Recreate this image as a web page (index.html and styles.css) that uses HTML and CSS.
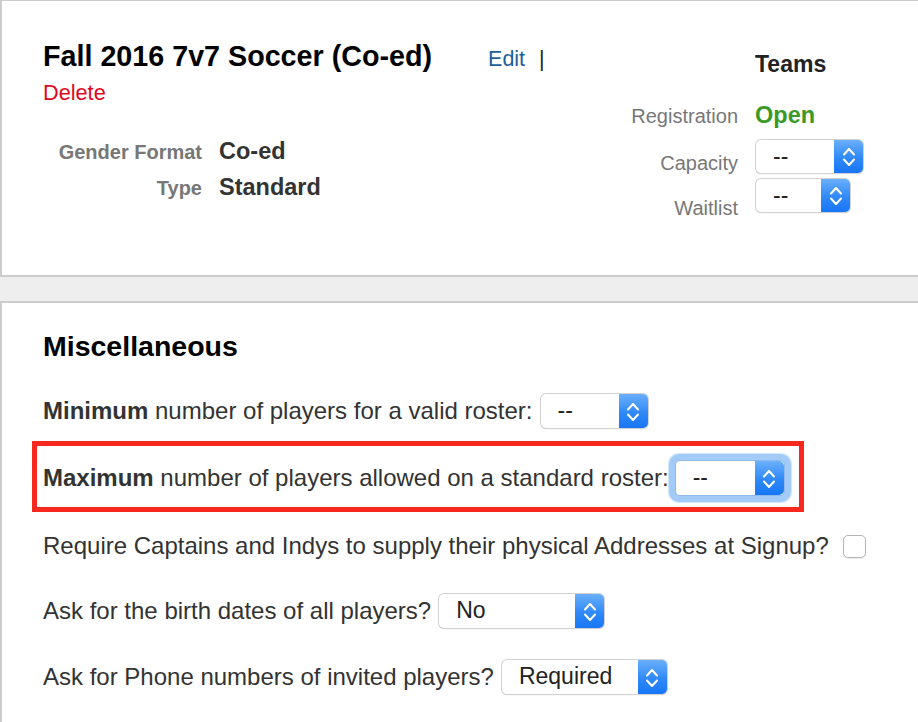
FILE: index.html
```html
<!DOCTYPE html>
<html>
<head>
<meta charset="utf-8">
<link rel="stylesheet" href="styles.css">
</head>
<body>
<section class="panel panel-top">
  <div class="summary">
    <div class="title-line">
      <h1 class="title">Fall 2016 7v7 Soccer (Co-ed)</h1>
      <a class="edit">Edit</a><span class="sep">|</span>
    </div>
    <a class="delete">Delete</a>
    <div class="details">
      <span class="dlabel">Gender Format</span><span class="dvalue">Co-ed</span>
      <span class="dlabel">Type</span><span class="dvalue">Standard</span>
    </div>
  </div>
  <div class="teams">
    <div class="trow trow-head"><span class="tlabel"></span><span class="thead">Teams</span></div>
    <div class="trow trow-reg"><span class="tlabel">Registration</span><span class="open">Open</span></div>
    <div class="trow trow-cap"><span class="tlabel tlabel-cap">Capacity</span>
      <span class="sel w107"><span class="val">--</span><span class="arr"><svg viewBox="0 0 14 21" width="14" height="21"><polyline points="2,8.5 7,3 12,8.5"/><polyline points="2,13.5 7,19 12,13.5"/></svg></span></span>
    </div>
    <div class="trow trow-wait"><span class="tlabel tlabel-wait">Waitlist</span>
      <span class="sel w94"><span class="val">--</span><span class="arr"><svg viewBox="0 0 14 21" width="14" height="21"><polyline points="2,8.5 7,3 12,8.5"/><polyline points="2,13.5 7,19 12,13.5"/></svg></span></span>
    </div>
  </div>
</section>

<section class="panel panel-misc">
  <h2 class="heading">Miscellaneous</h2>
  <div class="row row-min">
    <span><b>Minimum</b> number of players for a valid roster:</span>
    <span class="sel w107"><span class="val">--</span><span class="arr"><svg viewBox="0 0 14 21" width="14" height="21"><polyline points="2,8.5 7,3 12,8.5"/><polyline points="2,13.5 7,19 12,13.5"/></svg></span></span>
  </div>
  <div class="highlight">
    <div class="row row-max">
      <span><b>Maximum</b> number of players allowed on a standard roster:</span>
      <span class="sel w108 focused"><span class="val">--</span><span class="arr"><svg viewBox="0 0 14 21" width="14" height="21"><polyline points="2,8.5 7,3 12,8.5"/><polyline points="2,13.5 7,19 12,13.5"/></svg></span></span>
    </div>
  </div>
  <div class="row row-addr">
    <span>Require Captains and Indys to supply their physical Addresses at Signup?</span>
    <span class="check"></span>
  </div>
  <div class="row row-birth">
    <span>Ask for the birth dates of all players?</span>
    <span class="sel w165"><span class="val">No</span><span class="arr"><svg viewBox="0 0 14 21" width="14" height="21"><polyline points="2,8.5 7,3 12,8.5"/><polyline points="2,13.5 7,19 12,13.5"/></svg></span></span>
  </div>
  <div class="row row-phone">
    <span>Ask for Phone numbers of invited players?</span>
    <span class="sel w165"><span class="val">Required</span><span class="arr"><svg viewBox="0 0 14 21" width="14" height="21"><polyline points="2,8.5 7,3 12,8.5"/><polyline points="2,13.5 7,19 12,13.5"/></svg></span></span>
  </div>
</section>
</body>
</html>
```
FILE: styles.css
```css
html, body {
  margin: 0;
  padding: 0;
  overflow: hidden;
  background: #eeeeee;
  font-family: "Liberation Sans", Arial, Helvetica, sans-serif;
  color: #333;
}

.panel {
  background: #fff;
  border: 2px solid #cccccc;
  border-right: none;
  width: 940px;
  box-sizing: border-box;
}

.panel-top {
  border-top-width: 1px;
  height: 277px;
  padding: 38px 0 0 41px;
  display: flex;
}

.summary {
  width: 565px;
  flex: none;
}

.title-line {
  display: flex;
  align-items: baseline;
  height: 34px;
}

.title {
  margin: 0;
  font-size: 28.7px;
  line-height: 34px;
  font-weight: bold;
  color: #000;
}

.edit {
  margin-left: 56px;
  font-size: 21.5px;
  line-height: 34px;
  color: #1d5f9b;
}

.sep {
  margin-left: 14px;
  font-size: 21.5px;
  line-height: 34px;
  color: #222;
}

.delete {
  display: block;
  margin-top: 7px;
  font-size: 21.7px;
  line-height: 26px;
  color: #e0081c;
}

.details {
  margin-top: 27px;
  display: grid;
  grid-template-columns: 159px auto;
  grid-auto-rows: 36px;
  column-gap: 17px;
  align-items: baseline;
}

.dlabel {
  text-align: right;
  font-size: 20px;
  line-height: 36px;
  font-weight: bold;
  color: #777;
}

.dvalue {
  font-size: 23.5px;
  line-height: 36px;
  font-weight: bold;
  color: #333;
}

.teams {
  display: flex;
  flex-direction: column;
}

.trow {
  display: flex;
  column-gap: 17px;
}

.tlabel {
  width: 130px;
  flex: none;
  text-align: right;
  font-size: 20px;
  line-height: 24px;
  color: #777;
}

.trow-head {
  margin-top: 10px;
  height: 30px;
}

.thead {
  font-size: 23px;
  line-height: 30px;
  font-weight: bold;
  color: #222;
}

.trow-reg {
  margin-top: 21px;
  align-items: baseline;
}

.trow-reg .tlabel {
  line-height: 30px;
}

.open {
  font-size: 23.5px;
  line-height: 30px;
  font-weight: bold;
  color: #3a9a28;
}

.trow-cap {
  margin-top: 9px;
  align-items: flex-start;
}

.tlabel-cap {
  padding-top: 11px;
}

.trow-wait {
  margin-top: 4px;
  align-items: flex-start;
}

.tlabel-wait {
  padding-top: 17px;
}

/* fake macOS select */
.sel {
  display: inline-flex;
  flex: none;
  height: 33px;
  box-sizing: border-box;
  border-radius: 5px;
  background: #fff;
  box-shadow: 0 0 0 1px #d2d2d2, 0 1px 1px #b9b9b9;
  margin: 0 1px;
}

.row .sel {
  height: 34px;
}

.sel .val {
  flex: 1;
  padding-left: 17px;
  font-size: 23px;
  line-height: 33px;
  color: #222;
  white-space: nowrap;
}

.sel .arr {
  width: 29px;
  flex: none;
  border-radius: 0 5px 5px 0;
  background: linear-gradient(#6aaffb, #2f89f8 55%, #1876f6);
  display: flex;
  align-items: center;
  justify-content: center;
}

.sel .arr svg {
  fill: none;
  stroke: #fff;
  stroke-width: 2;
  stroke-linecap: round;
  stroke-linejoin: round;
}

.w94 { width: 94px; }
.w107 { width: 107px; }
.w108 { width: 108px; }
.w165 { width: 165px; }

.sel.focused {
  box-shadow: 0 0 0 1px #8fb9ea, 0 0 0 7px #a2cbf8, 0 0 1px 8px rgba(162, 203, 248, 0.5);
  border-radius: 4px;
}

/* Misc panel */
.panel-misc {
  margin-top: 24px;
  height: 460px;
  padding: 27px 0 0 41px;
}

.heading {
  margin: 0;
  font-size: 28.5px;
  line-height: 32px;
  font-weight: bold;
  color: #000;
}

.row {
  display: flex;
  align-items: center;
  column-gap: 7px;
  height: 34px;
  font-size: 24px;
  color: #333;
  white-space: nowrap;
}

.row b {
  color: #333;
}

.row-min {
  margin-top: 32px;
}

.highlight {
  margin-top: 13px;
  margin-left: -11px;
  width: 772px;
  box-sizing: border-box;
  border: 5px solid #f7291e;
  padding: 15px 0 12px 6px;
}

.row-max {
  column-gap: 6px;
}

.row-addr {
  margin-top: 17px;
  column-gap: 14px;
}

.check {
  width: 23px;
  height: 23px;
  box-sizing: border-box;
  border: 1px solid #b5b5b5;
  border-radius: 5px;
  background: #fff;
  box-shadow: 0 1px 1px rgba(0, 0, 0, 0.08);
}

.row-birth {
  margin-top: 31px;
}

.row-phone {
  margin-top: 32px;
}
```
